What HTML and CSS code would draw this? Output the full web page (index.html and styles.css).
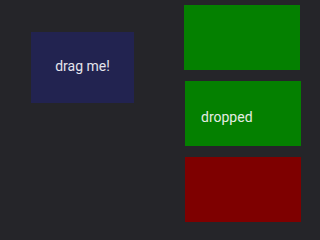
FILE: index.html
```html
<!DOCTYPE html>
<html>
<head>
<meta charset="utf-8">
<link rel="stylesheet" href="styles.css">
</head>
<body>
<div class="stage">
  <div class="source">
    <div class="drag">drag me!</div>
  </div>
  <div class="targets">
    <div class="target green first"></div>
    <div class="target green dropped">dropped</div>
    <div class="target red"></div>
  </div>
</div>
</body>
</html>
```
FILE: styles.css
```css
html, body {
  margin: 0;
  padding: 0;
  background: #252529;
  width: 308px;
  height: 227px;
  overflow: hidden;
  font-family: Roboto, "Noto Sans", sans-serif;
}
.stage {
  display: flex;
  align-items: flex-start;
}
.source {
  padding: 32px 0 0 31px;
}
.drag {
  width: 103px;
  height: 71px;
  background: #222350;
  color: #e4e4ec;
  font-size: 14px;
  display: flex;
  align-items: center;
  justify-content: center;
  padding-bottom: 4px;
  box-sizing: border-box;
}
.targets {
  margin-left: 51px;
  padding-top: 5px;
  display: flex;
  flex-direction: column;
  gap: 11px;
}
.target {
  width: 116px;
  height: 65px;
}
.first {
  margin-left: -1px;
}
.green {
  background: #048000;
}
.red {
  background: #7e0000;
}
.dropped {
  color: #e4ece4;
  font-size: 14px;
  display: flex;
  align-items: center;
  padding-left: 16px;
  padding-top: 6px;
  box-sizing: border-box;
}
```
